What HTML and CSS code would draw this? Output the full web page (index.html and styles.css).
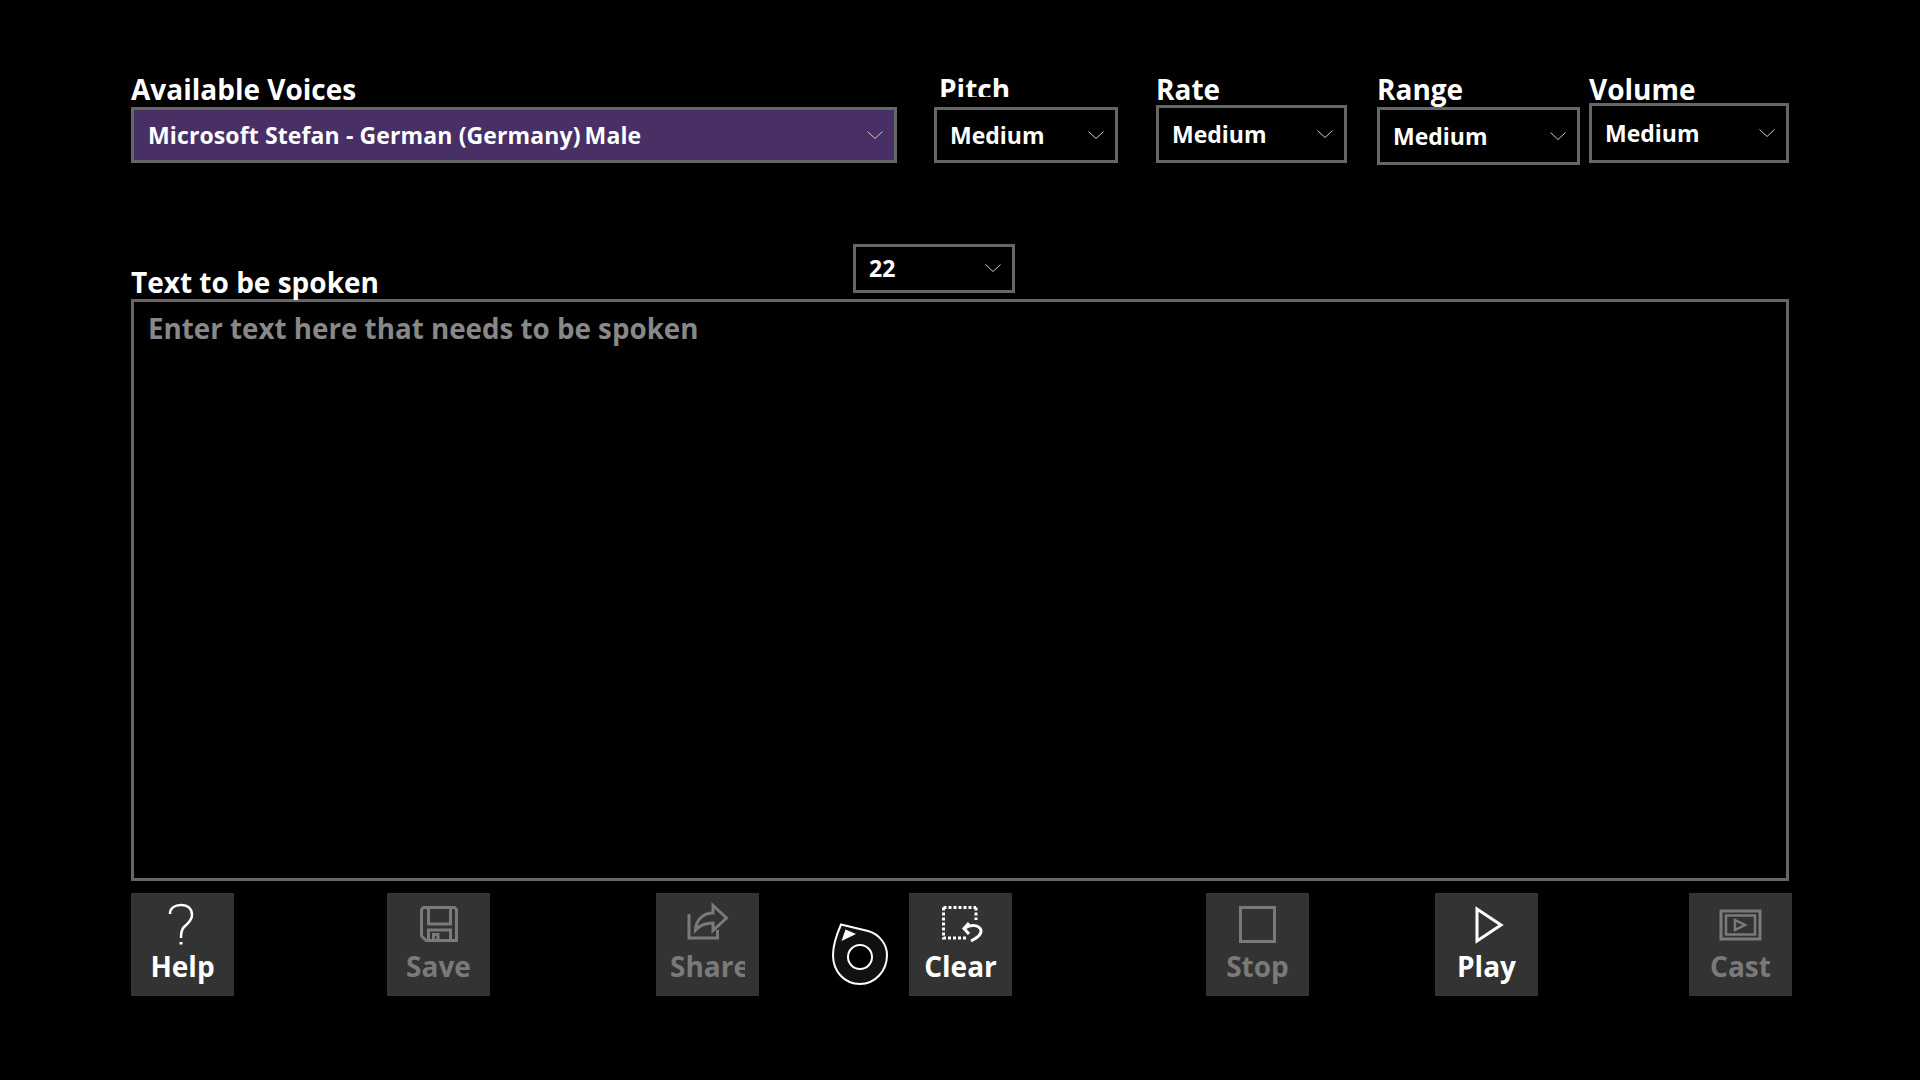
FILE: index.html
```html
<!DOCTYPE html>
<html lang="en">
<head>
<meta charset="utf-8">
<title>Text to Speech</title>
<link rel="stylesheet" href="styles.css">
</head>
<body>
<main class="app">
  <section class="settings">
    <div class="field field-voice">
      <div class="label">Available Voices</div>
      <div class="select select-voice"><span>Microsoft Stefan - German (Germany)&#8201;Male</span><svg class="chev" viewBox="0 0 16 8"><path d="M.5.500 8 7.500 15.500.500"/></svg></div>
    </div>
    <div class="field field-pitch">
      <div class="label label-clip">Pitch</div>
      <div class="select"><span>Medium</span><svg class="chev" viewBox="0 0 16 8"><path d="M.5.500 8 7.500 15.500.500"/></svg></div>
    </div>
    <div class="field field-rate">
      <div class="label">Rate</div>
      <div class="select"><span>Medium</span><svg class="chev" viewBox="0 0 16 8"><path d="M.5.500 8 7.500 15.500.500"/></svg></div>
    </div>
    <div class="field field-range">
      <div class="label">Range</div>
      <div class="select"><span>Medium</span><svg class="chev" viewBox="0 0 16 8"><path d="M.5.500 8 7.500 15.500.500"/></svg></div>
    </div>
    <div class="field field-volume">
      <div class="label">Volume</div>
      <div class="select"><span>Medium</span><svg class="chev" viewBox="0 0 16 8"><path d="M.5.500 8 7.500 15.500.500"/></svg></div>
    </div>
  </section>

  <section class="editor-head">
    <div class="label">Text to be spoken</div>
    <div class="select select-size"><span>22</span><svg class="chev" viewBox="0 0 16 8"><path d="M.5.500 8 7.500 15.500.500"/></svg></div>
  </section>
  <div class="editor">Enter text here that needs to be spoken</div>

  <section class="toolbar">
    <div class="btn btn-help">
      <svg class="ico" viewBox="0 0 103 55"><path class="s2" d="M39 21C39 15 44 12 50 12C57 12 61 16 61 22C61 28 56 31 53 34C51 36 50 38 50 45"/><rect class="f" x="48.500" y="49" width="3" height="2.500"/></svg>
      <span>Help</span>
    </div>
    <div class="btn off btn-save">
      <svg class="ico" viewBox="0 0 103 55"><path class="s3" d="M36.500 14.500H67.500L69.500 16.500V47.500H39L34.500 43V16.500ZM41.500 14.500V31H63.500V14.500M41.500 47.500V37H63.500V47.500M46.500 47.500V41.500H51V47.500"/></svg>
      <span>Save</span>
    </div>
    <div class="btn off btn-share">
      <svg class="ico" viewBox="0 0 103 55"><path class="s3" d="M33 21V45H61.500V37"/><path class="s3" d="M70.500 25L57 12.500V20C47 20 40 27 39.500 37C44 32 50 30 57 30V37.500Z"/></svg>
      <span>Share</span>
    </div>
    <svg class="logo" viewBox="0 0 56 62"><path class="logo-body" d="M9 1.500L36 8C47 11 55 21 55 32C55 48 43 61 28 61C12 61 1 48 1 32C1 22 4 13 9 1.500Z"/><path class="logo-tip" d="M13.500 6.500L24 11L9.500 18Z"/><circle class="logo-hole" cx="28" cy="34" r="12"/></svg>
    <div class="btn btn-clear">
      <svg class="ico" viewBox="0 0 103 55"><path class="dash" d="M34.500 14.500H67M34.500 14.500V45H58M67 14.500V27"/><path class="s3" d="M60 30L55 35.500L60 41M56 35C62 31 70 32 72 37C73 41 68 45 62 48"/></svg>
      <span>Clear</span>
    </div>
    <div class="btn off btn-stop">
      <svg class="ico" viewBox="0 0 103 55"><rect class="s3" x="34.500" y="14.500" width="34" height="34"/></svg>
      <span>Stop</span>
    </div>
    <div class="btn btn-play">
      <svg class="ico" viewBox="0 0 103 55"><path class="s3" d="M42 16V48L66 32Z"/></svg>
      <span>Play</span>
    </div>
    <div class="btn off btn-cast">
      <svg class="ico" viewBox="0 0 103 55"><rect class="s3" x="32" y="18" width="39" height="28"/><rect class="s2" x="37" y="22.500" width="29" height="19"/><path class="s2" d="M46 27V37L56 32Z"/></svg>
      <span>Cast</span>
    </div>
  </section>
</main>
</body>
</html>
```
FILE: styles.css
```css
* { box-sizing: border-box; }
html, body { margin: 0; height: 100%; background: #000; }
body {
  color: #fff;
  font-family: "Open Sans", "Noto Sans", sans-serif;
  font-weight: 700;
  overflow: hidden;
}
.app { width: 1920px; height: 1080px; padding: 72px 131px 0 131px; }

.settings { display: flex; align-items: flex-end; height: 91px; }
.field { display: flex; flex-direction: column; }
.field-voice { width: 766px; }
.field-pitch { width: 184px; margin-left: 37px; }
.field-rate { width: 191px; margin-left: 38px; }
.field-range { width: 203px; margin-left: 30px; margin-bottom: -2px; }
.field-volume { width: 200px; margin-left: 9px; }

.label { font-size: 28px; line-height: 35px; height: 35px; white-space: nowrap; }
.label-clip { overflow: hidden; height: 25px; margin-bottom: 10px; padding-left: 5px; }
.field-rate .label { margin-bottom: -2px; }
.field-volume .label { margin-bottom: -4px; position: relative; }

.select {
  display: flex;
  align-items: center;
  justify-content: space-between;
  height: 56px;
  padding: 0 11px 0 13px;
  border: 3px solid #666;
  font-size: 23px;
  background: #000;
}
.select-voice { background: #482f66; padding-left: 14px; letter-spacing: .12px; }
.field-rate .select { height: 58px; }
.field-range .select { height: 58px; }
.field-volume .select { height: 60px; }
.chev { width: 16px; height: 8px; flex: none; }
.chev path { fill: none; stroke: #ccc; stroke-width: 1; }

.editor-head { display: flex; justify-content: space-between; align-items: flex-end; height: 130px; width: 884px; }
.editor-head .label { margin-bottom: -7px; }
.select-size { width: 162px; height: 49px; padding-bottom: 2px; }
.editor {
  height: 582px;
  margin-top: 6px;
  padding: 7px 14px;
  border: 3px solid #666;
  font-size: 27.750px;
  line-height: 38px;
  color: #888;
}

.toolbar { display: flex; margin-top: 12px; width: 1661px; }
.btn {
  width: 103px;
  height: 103px;
  flex: none;
  background: #333;
  text-align: center;
  font-size: 28px;
  line-height: 36px;
  overflow: hidden;
  color: #fff;
}
.btn.off { color: #7a7a7a; }
.ico { display: block; width: 103px; height: 55px; margin-bottom: 0; }
.btn span { display: block; white-space: nowrap; }
.s2, .s3, .dash { fill: none; stroke: currentColor; }
.s2 { stroke-width: 2.500; }
.s3 { stroke-width: 3; }
.dash { stroke-width: 3; stroke-dasharray: 3 2; }
.f { fill: currentColor; }

.btn-save { margin-left: 153px; }
.btn-share { margin-left: 166px; }
.btn-share span { width: 75px; margin-left: 14px; overflow: hidden; text-align: left; }
.logo { width: 56px; height: 62px; margin: 30px 21px 0 73px; flex: none; }
.logo-body { fill: #111; stroke: #fff; stroke-width: 2; }
.logo-tip { fill: #fff; }
.logo-hole { fill: #000; stroke: #fff; stroke-width: 2; }
.btn-stop { margin-left: 194px; }
.btn-play { margin-left: 126px; }
.btn-cast { margin-left: 151px; }
```
